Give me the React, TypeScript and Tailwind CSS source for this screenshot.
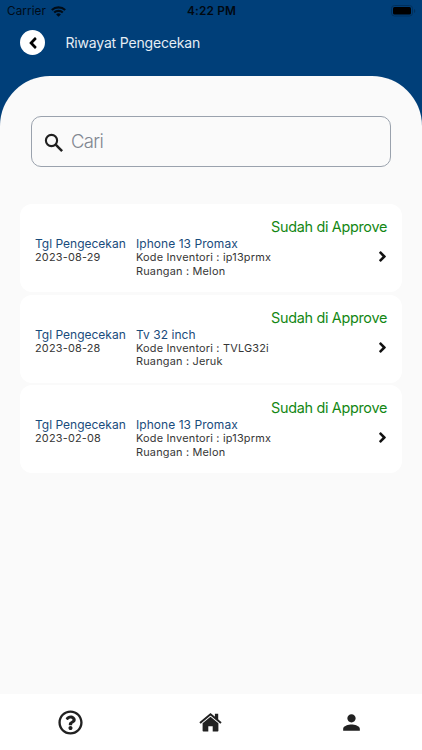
import React from "react";
import { FaAngleLeft, FaAngleRight, FaRegQuestionCircle } from "react-icons/fa";
import { MdPerson } from "react-icons/md";

interface Check {
  date: string;
  item: string;
  code: string;
  room: string;
}

const checks: Check[] = [
  { date: "2023-08-29", item: "Iphone 13 Promax", code: "ip13prmx", room: "Melon" },
  { date: "2023-08-28", item: "Tv 32 inch", code: "TVLG32i", room: "Jeruk" },
  { date: "2023-02-08", item: "Iphone 13 Promax", code: "ip13prmx", room: "Melon" },
];

function HomeIcon() {
  return (
    <svg width="23" height="19" viewBox="0 0 23 19">
      <path d="M3.6 10.3 11.5 3.7l7.9 6.6v7.5q0 .8-.8.8h-4.9v-5.3H9.3v5.3H4.4q-.8 0-.8-.8z" fill="currentColor" />
      <path d="M15.9.8h3.3v7.2l-3.3-2.7z" fill="currentColor" />
      <path d="M1 9.9 11.5 1.3 22 9.9" fill="none" stroke="currentColor" strokeWidth="2" />
    </svg>
  );
}

function SearchIcon() {
  return (
    <svg className="mt-[2px]" width="24" height="24" viewBox="0 0 24 24" fill="none" stroke="#202020">
      <circle cx="9.5" cy="9.5" r="5.6" strokeWidth="2.1" />
      <path d="m13.7 13.7 6.4 6.4" strokeWidth="2.5" />
    </svg>
  );
}

function StatusBar() {
  return (
    <div className="grid h-[21px] grid-cols-3 items-center pl-[7px] pr-[6px] text-black">
      <div className="flex items-center gap-[5px] text-[11.7px] leading-[22px] tracking-[0.1px] opacity-80">
        <span>Carrier</span>
        <svg width="15" height="11" viewBox="0 0 15 11" fill="none" stroke="black" strokeWidth="2.1">
          <path d="M0.8 4.1a9.5 9.5 0 0 1 13.4 0M3.2 6.6a6.1 6.1 0 0 1 8.6 0" />
          <path d="M7.5 10.8 5.1 8.4a3.5 3.5 0 0 1 4.8 0z" fill="black" stroke="none" />
        </svg>
      </div>
      <span className="text-center text-[11.8px] font-semibold leading-[22px] tracking-[0.2px] opacity-85">4:22 PM</span>
      <svg className="justify-self-end" width="26" height="12" viewBox="0 0 26 12">
        <rect x="1.5" y="0.5" width="21" height="10.5" rx="3" fill="none" stroke="#00305d" />
        <rect x="3" y="2" width="18" height="7.5" rx="1.5" fill="black" />
        <path d="M24 4v4q1.3-.6 1.3-2T24 4z" fill="#00305d" />
      </svg>
    </div>
  );
}

function CheckCard({ check }: { check: Check }) {
  return (
    <article className="flex h-[88px] flex-col rounded-[12px] bg-white px-[15px] pt-[13px]">
      <p className="text-right text-[14.4px] leading-[19px] tracking-[-0.3px] text-[#148714]">Sudah di Approve</p>
      <div className="flex text-[10.9px] leading-[13.6px] tracking-[0.2px] text-[#363636]">
        <div className="w-[101px] shrink-0">
          <p className="pt-px text-[12px] leading-[14px] tracking-[0px] text-[#194b7c]">Tgl Pengecekan</p>
          <p>{check.date}</p>
        </div>
        <div className="flex-1">
          <p className="pt-px text-[12px] leading-[14px] tracking-[0.05px] text-[#194b7c]">{check.item}</p>
          <p>Kode Inventori : {check.code}</p>
          <p>Ruangan : {check.room}</p>
        </div>
        <FaAngleRight className="-mr-[4px] mt-[12px] text-[#111111]" size={17} />
      </div>
    </article>
  );
}

export default function App() {
  return (
    <main className="flex h-[750px] w-[422px] flex-col overflow-hidden bg-[#003f79] font-['Inter',sans-serif]">
      <StatusBar />
      <header className="flex h-[55px] items-start pl-[20px] pt-[9px]">
        <button className="flex size-[25px] items-center justify-center rounded-full bg-white text-black" aria-label="Kembali">
          <FaAngleLeft size={18} />
        </button>
        <h1 className="ml-[20.5px] text-[14px] leading-[26px] tracking-[-0.18px] text-[#e5edf4]">Riwayat Pengecekan</h1>
      </header>
      <section className="flex flex-1 flex-col rounded-t-[50px] bg-[#fafafa] px-[20px] pt-[40px]">
        <label className="ml-[11px] mr-[11px] flex h-[51px] items-center rounded-[10px] border border-[#9aa2ad] pl-[10px]">
          <SearchIcon />
          <span className="ml-[5px] mt-px text-[18.5px] font-light tracking-[-0.65px] text-[#818791]">Cari</span>
        </label>
        <div className="mt-[37px] flex flex-col gap-[2.7px]">
          {checks.map((check) => (
            <CheckCard key={check.date} check={check} />
          ))}
        </div>
      </section>
      <nav className="grid h-[56px] grid-cols-3 items-center justify-items-center bg-white text-[#212121]">
        <FaRegQuestionCircle size={25} />
        <HomeIcon />
        <MdPerson size={25} />
      </nav>
    </main>
  );
}
